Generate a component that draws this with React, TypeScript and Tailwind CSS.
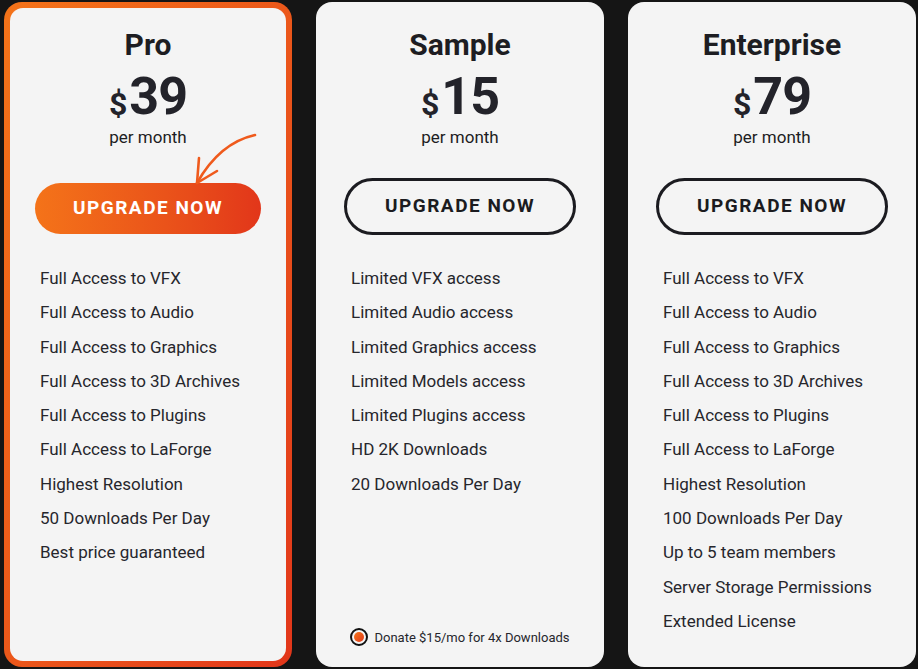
import React from "react";

type Plan = {
  name: string;
  price: string;
  features: string[];
  featured?: boolean;
  donate?: boolean;
};

const plans: Plan[] = [
  {
    name: "Pro",
    price: "39",
    featured: true,
    features: [
      "Full Access to VFX",
      "Full Access to Audio",
      "Full Access to Graphics",
      "Full Access to 3D Archives",
      "Full Access to Plugins",
      "Full Access to LaForge",
      "Highest Resolution",
      "50 Downloads Per Day",
      "Best price guaranteed",
    ],
  },
  {
    name: "Sample",
    price: "15",
    donate: true,
    features: [
      "Limited VFX access",
      "Limited Audio access",
      "Limited Graphics access",
      "Limited Models access",
      "Limited Plugins access",
      "HD 2K Downloads",
      "20 Downloads Per Day",
    ],
  },
  {
    name: "Enterprise",
    price: "79",
    features: [
      "Full Access to VFX",
      "Full Access to Audio",
      "Full Access to Graphics",
      "Full Access to 3D Archives",
      "Full Access to Plugins",
      "Full Access to LaForge",
      "Highest Resolution",
      "100 Downloads Per Day",
      "Up to 5 team members",
      "Server Storage Permissions",
      "Extended License",
    ],
  },
];

const font = { fontFamily: "Roboto, 'Noto Sans', sans-serif" };

const Arrow = () => (
  <svg
    className="absolute left-[183px] top-[125px]"
    width="76"
    height="64"
    viewBox="0 0 76 64"
    fill="none"
  >
    <path
      d="M68 8 C 50 12, 28 24, 10 56"
      stroke="#ef5a1c"
      strokeWidth="2.6"
      strokeLinecap="round"
    />
    <path
      d="M12 31 L 10 56 L 30 44"
      stroke="#ef5a1c"
      strokeWidth="2.6"
      strokeLinecap="round"
      strokeLinejoin="round"
    />
  </svg>
);

const PlanBody = ({ plan }: { plan: Plan }) => (
  <div className="flex h-full flex-col items-center">
    <h2
      className={`${plan.featured ? "mt-[19px]" : "mt-[25px]"} text-[30px] font-bold leading-[36px] text-[#1d1d22]`}
    >
      {plan.name}
    </h2>
    <div className="mt-[8px] flex items-end leading-none text-[#23232a]">
      <span className="mb-[3px] text-[32px] font-bold">$</span>
      <span className="ml-[2px] text-[52px] font-bold tracking-[-1px]">
        {plan.price}
      </span>
    </div>
    <p className="mt-[4px] text-[17px] leading-[20px] text-[#1d1d22]">per month</p>
    {plan.featured ? (
      <button className="mt-[36px] h-[51px] w-[226px] rounded-full bg-gradient-to-r from-[#f47319] to-[#e2361a] text-[19px] font-bold tracking-[1.5px] text-white">
        UPGRADE NOW
      </button>
    ) : (
      <button className="mt-[31px] h-[57px] w-[232px] rounded-full border-[3px] border-[#1b1b20] text-[19px] font-bold tracking-[1.5px] text-[#1b1b20]">
        UPGRADE NOW
      </button>
    )}
    <ul
      className={`w-full ${plan.featured ? "mt-[34px] px-[30px]" : "mt-[33px] px-[35px]"}`}
    >
      {plan.features.map((f) => (
        <li key={f} className="h-[34.3px] text-[17px] leading-[20px] text-[#26262c]">
          {f}
        </li>
      ))}
    </ul>
    {plan.donate && (
      <div className="mt-auto mb-[20px] flex items-center gap-[6px]">
        <span className="flex h-[18px] w-[18px] items-center justify-center rounded-full border-2 border-[#111]">
          <span className="h-[10px] w-[10px] rounded-full bg-gradient-to-br from-[#f47319] to-[#e2361a]" />
        </span>
        <span className="text-[13px] text-[#26262c]">Donate $15/mo for 4x Downloads</span>
      </div>
    )}
  </div>
);

export default function App() {
  return (
    <div
      className="flex h-[669px] w-[918px] gap-[24px] bg-[#151515] py-[2px] pl-[4px]"
      style={font}
    >
      {plans.map((plan) =>
        plan.featured ? (
          <div
            key={plan.name}
            className="relative h-[665px] w-[288px] rounded-[18px] bg-gradient-to-br from-[#f47319] to-[#e2361a] p-[6px]"
          >
            <div className="h-full rounded-[13px] bg-[#f4f4f4]">
              <PlanBody plan={plan} />
            </div>
            <Arrow />
          </div>
        ) : (
          <div key={plan.name} className="h-[665px] w-[288px] rounded-[16px] bg-[#f4f4f4]">
            <PlanBody plan={plan} />
          </div>
        )
      )}
    </div>
  );
}
